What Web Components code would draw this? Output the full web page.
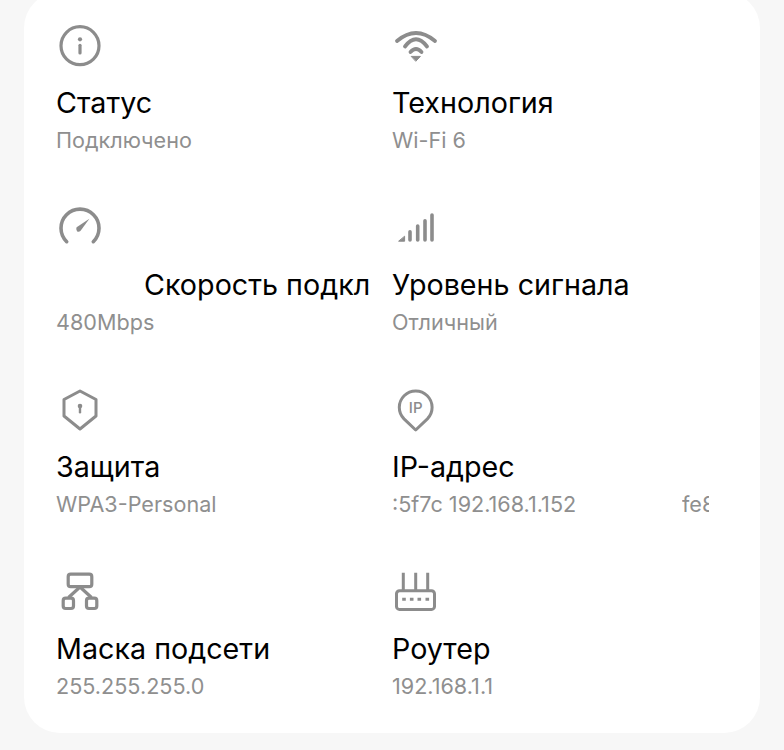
<!DOCTYPE html>
<html lang="ru">
<head>
<meta charset="utf-8">
<title>Wi-Fi</title>
<style>
  html, body { margin: 0; height: 750px; overflow: hidden; background: #f7f7f7; }
  body { font-family: "Inter", "Liberation Sans", sans-serif; }
</style>
</head>
<body>
<network-card>
  <info-item title-text="Статус" value="Подключено">
    <svg slot="icon" viewBox="0 0 48 48" width="48" height="48" fill="none" stroke="#8c8c8c" stroke-width="3.2">
      <circle cx="24" cy="24.7" r="19"/>
      <circle cx="24" cy="18.3" r="2.1" fill="#8c8c8c" stroke="none"/>
      <path d="M24 24.3v7.6" stroke-linecap="round"/>
    </svg>
  </info-item>
  <info-item title-text="Технология" value="Wi-Fi 6">
    <svg slot="icon" viewBox="0 0 48 48" width="48" height="48" fill="none" stroke="#8c8c8c" stroke-width="3.8" stroke-linecap="round">
      <path d="M5 20Q24 4 43 20"/>
      <path d="M13 25.5Q24 11 35 25.5"/>
      <path d="M18.5 31Q24 25 29.5 31"/>
      <path d="M19.6 35.4H28.4L24 40Z" fill="#8c8c8c" stroke="#8c8c8c" stroke-width="1" stroke-linejoin="round"/>
    </svg>
  </info-item>
  <info-item title-text="Скорость подкл" value="480Mbps" scroll="88">
    <svg slot="icon" viewBox="0 0 48 48" width="48" height="48" fill="none" stroke="#8c8c8c" stroke-width="3.6" stroke-linecap="round">
      <path d="M10.7 38.7A19 19 0 1 1 37.3 38.7"/>
      <path d="M20.6 24.2L33.4 15.8L24.4 28Q22.6 29.4 21 28.2Q19.6 26.2 20.6 24.2Z" fill="#8c8c8c" stroke="none"/>
    </svg>
  </info-item>
  <info-item title-text="Уровень сигнала" value="Отличный">
    <svg slot="icon" viewBox="0 0 48 48" width="48" height="48" fill="none" stroke="#8c8c8c" stroke-width="3.6" stroke-linecap="round">
      <path d="M18 37V28.7M25.7 37V23M33 37V17.7M40 37V12"/>
      <path d="M7 38.2H12.6V33.6Z" fill="#8c8c8c" stroke="#8c8c8c" stroke-width="1" stroke-linejoin="round"/>
    </svg>
  </info-item>
  <info-item title-text="Защита" value="WPA3-Personal">
    <svg slot="icon" viewBox="0 0 48 48" width="48" height="48" fill="none" stroke="#8c8c8c" stroke-width="3" stroke-linejoin="round">
      <path d="M24 6L40 14.5V31L24 44L8 31V14.5Z"/>
      <circle cx="24" cy="21" r="2.3" fill="#8c8c8c" stroke="none"/>
      <path d="M24 21v6.2" stroke-width="2.4" stroke-linecap="round"/>
    </svg>
  </info-item>
  <info-item title-text="IP-адрес" value=":5f7c 192.168.1.152" next="fe8">
    <svg slot="icon" viewBox="0 0 48 48" width="48" height="48" fill="none" stroke="#8c8c8c" stroke-width="3" stroke-linejoin="round">
      <path d="M23.7 45L12 33.9A16.4 16.4 0 1 1 35.4 33.9Z"/>
      <text x="23.7" y="27.6" text-anchor="middle" font-family="Inter, sans-serif" font-size="15" font-weight="500" fill="#8c8c8c" stroke="none">IP</text>
    </svg>
  </info-item>
  <info-item title-text="Маска подсети" value="255.255.255.0">
    <svg slot="icon" viewBox="0 0 48 48" width="48" height="48" fill="none" stroke="#8c8c8c" stroke-width="3.2">
      <rect x="12.2" y="7.2" width="23.6" height="12.5" rx="2.5"/>
      <rect x="7.2" y="31.2" width="10.3" height="10.3" rx="2.5"/>
      <rect x="30.5" y="31.2" width="10.3" height="10.3" rx="2.5"/>
      <path d="M24 20L12.5 30.5M24 20L35.5 30.5"/>
    </svg>
  </info-item>
  <info-item title-text="Роутер" value="192.168.1.1">
    <svg slot="icon" viewBox="0 0 48 48" width="48" height="48" fill="none" stroke="#8c8c8c" stroke-width="3">
      <rect x="4.5" y="23.8" width="38" height="18.6" rx="3"/>
      <path d="M11.3 5.7V23M23.7 5.7V23M35.7 5.7V23"/>
      <path d="M10.2 32.3h3.6M17.9 32.3h3.6M25.5 32.3h3.6M33.5 32.3h3.6"/>
    </svg>
  </info-item>
</network-card>

<script>
class NetworkCard extends HTMLElement {
  constructor(){
    super();
    this.attachShadow({mode:"open"});
    this.shadowRoot.innerHTML = `
    <style>
      :host{
        display:grid;
        grid-template-columns:316px 317px;
        column-gap:20px;
        row-gap:43px;
        box-sizing:border-box;
        width:736px;
        margin:-8px 0 0 24px;
        padding:29px 51px 27px 32px;
        background:#fff;
        border-radius:36px;
      }
    </style>
    <slot></slot>
    `;
  }
}

class InfoItem extends HTMLElement {
  constructor(){
    super();
    this.attachShadow({mode:"open"});
  }

  connectedCallback(){
    const title = this.getAttribute('title-text');
    const value = this.getAttribute('value');
    const scroll = this.getAttribute('scroll') || 0; //marquee offset of the title
    const next = this.getAttribute('next'); //second copy of a scrolling value
    this.shadowRoot.innerHTML = `
    <style>
      :host{
        display:block;
        min-width:0;
      }
      .icon{ height:48px; margin-bottom:15px; }
      .title, .value{
        line-height:38px;
        white-space:nowrap;
        overflow:hidden;
      }
      .title{ height:37px; font-size:28.7px; color:#000; padding-left:${scroll}px; }
      .value{ height:39px; font-size:21.6px; color:#8f8f8f; display:flex; justify-content:space-between; }
      .next{ width:27px; overflow:hidden; }
      ::slotted(svg){ display:block; }
    </style>
    <div class="icon"><slot name="icon"></slot></div>
    <div class="title">${title}</div>
    <div class="value"><span>${value}</span>${next ? `<span class="next">${next}</span>` : ''}</div>
    `;
  }
}

customElements.define('network-card', NetworkCard);
customElements.define('info-item', InfoItem);
</script>
</body>
</html>
